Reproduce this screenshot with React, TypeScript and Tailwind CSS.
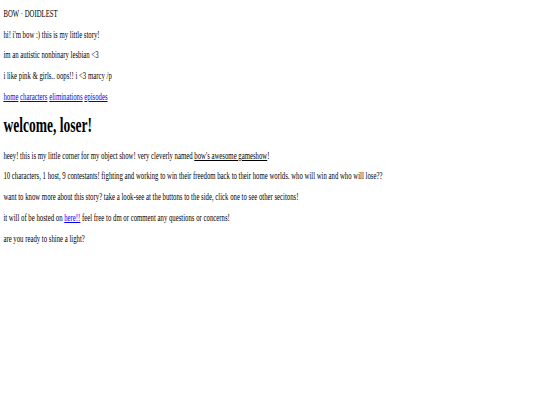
export default function App() {
  return (
    <div className="w-[540px] h-[405px] overflow-hidden bg-white">
      <div
        className="w-[800px] origin-top-left scale-x-[0.676] pl-[5px] pt-[8px] text-[10px] leading-[12px] text-black"
        style={{ fontFamily: '"Liberation Serif", "Times New Roman", serif' }}
      >
        <p className="mb-[8.7px]">BOW · DOIDLEST</p>
        <p className="mb-[8.7px]">hi! i'm bow :) this is my little story!</p>
        <p className="mb-[8.7px]">im an autistic nonbinary lesbian &lt;3</p>
        <p className="mb-[8.7px]">i like pink &amp; girls.. oops!! i &lt;3 marcy /p</p>
        <p className="mb-[10px]">
          <a href="#" className="text-[#0000ee] underline">home</a>{" "}
          <a href="#" className="text-[#0000ee] underline">characters</a>{" "}
          <a href="#" className="text-[#0000ee] underline">eliminations</a>{" "}
          <a href="#" className="text-[#0000ee] underline">episodes</a>
        </p>
        <h1 className="text-[20px] leading-[24px] font-bold mb-[13px]">welcome, loser!</h1>
        <p className="mb-[8.7px]">
          heey! this is my little corner for my object show! very cleverly named{" "}
          <span className="underline">bow's awesome gameshow</span>!
        </p>
        <p className="mb-[8.7px]">
          10 characters, 1 host, 9 contestants! fighting and working to win their freedom back to their home worlds. who will win and who will lose??
        </p>
        <p className="mb-[8.7px]">
          want to know more about this story? take a look-see at the buttons to the side, click one to see other secitons!
        </p>
        <p className="mb-[8.7px]">
          it will of be hosted on <a href="#" className="text-[#0000ee] underline">here!!</a> feel free to dm or comment any questions or concerns!
        </p>
        <p className="mb-[8.7px]">are you ready to shine a light?</p>
      </div>
    </div>
  );
}
